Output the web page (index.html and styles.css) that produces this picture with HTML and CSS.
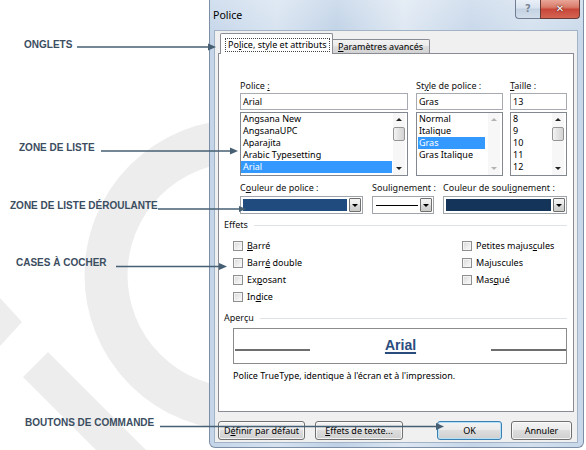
FILE: index.html
```html
<!DOCTYPE html>
<html lang="fr">
<head>
<meta charset="utf-8">
<title>Police</title>
<link rel="stylesheet" href="styles.css">
</head>
<body>
<div class="page">
  <svg class="watermark" width="586" height="450" viewBox="0 0 586 450">
    <circle cx="240" cy="275" r="134" fill="none" stroke="#ededed" stroke-width="43"/>
    <polygon points="0,298 22,322 0,346" fill="#ededed"/>
    <polygon points="48,352 146,450 96,450 23,377" fill="#ededed"/>
  </svg>

  <div class="window">
    <div class="titlebar">
      <span class="title">Police</span>
      <div class="caption">
        <div class="cap help">?</div>
        <div class="cap close">✕</div>
      </div>
    </div>
    <div class="client">
      <div class="tabs">
        <div class="tab active"><span class="focus">Po<u>l</u>ice, style et attributs</span></div>
        <div class="tab inactive"><u>P</u>aramètres avancés</div>
      </div>
      <div class="panel">
        <div class="fontrow">
          <div class="fcol w1">
            <div class="lbl">Police <u>:</u></div>
            <div class="tbox">Arial</div>
            <div class="list">
              <ul class="items">
                <li>Angsana New</li>
                <li>AngsanaUPC</li>
                <li>Aparajita</li>
                <li>Arabic Typesetting</li>
                <li class="sel">Arial</li>
              </ul>
              <div class="sbar"><span class="arr up"></span><span class="thumb"></span><span class="arr down"></span></div>
            </div>
          </div>
          <div class="fcol w2">
            <div class="lbl">St<u>y</u>le de police :</div>
            <div class="tbox">Gras</div>
            <div class="list">
              <ul class="items">
                <li>Normal</li>
                <li>Italique</li>
                <li class="sel short">Gras</li>
                <li>Gras Italique</li>
              </ul>
              <div class="sbar disabled"><span class="arr up"></span><span class="arr down"></span></div>
            </div>
          </div>
          <div class="fcol w3">
            <div class="lbl"><u>T</u>aille :</div>
            <div class="tbox">13</div>
            <div class="list">
              <ul class="items">
                <li>8</li>
                <li>9</li>
                <li>10</li>
                <li>11</li>
                <li>12</li>
              </ul>
              <div class="sbar"><span class="arr up"></span><span class="thumb"></span><span class="arr down"></span></div>
            </div>
          </div>
        </div>

        <div class="ddrow">
          <div class="dcol d1">
            <div class="lbl">C<u>o</u>uleur de police :</div>
            <div class="combo"><span class="swatch blue"></span><span class="dbtn"></span></div>
          </div>
          <div class="dcol d2">
            <div class="lbl">Souli<u>g</u>nement :</div>
            <div class="combo"><span class="uline"></span><span class="dbtn"></span></div>
          </div>
          <div class="dcol d3">
            <div class="lbl">Couleur de soul<u>i</u>gnement :</div>
            <div class="combo"><span class="swatch navy"></span><span class="dbtn"></span></div>
          </div>
        </div>

        <div class="group"><span>Effets</span><span class="rule"></span></div>
        <div class="checks">
          <div class="chk"><span class="box"></span><span><u>B</u>arré</span></div>
          <div class="chk"><span class="box"></span><span>Petites majus<u>c</u>ules</span></div>
          <div class="chk"><span class="box"></span><span>Barr<u>é</u> double</span></div>
          <div class="chk"><span class="box"></span><span>Ma<u>j</u>uscules</span></div>
          <div class="chk"><span class="box"></span><span>Ex<u>p</u>osant</span></div>
          <div class="chk"><span class="box"></span><span>Mas<u>q</u>ué</span></div>
          <div class="chk"><span class="box"></span><span>In<u>d</u>ice</span></div>
        </div>

        <div class="group g2"><span>Aperçu</span><span class="rule"></span></div>
        <div class="preview">
          <span class="pline"></span>
          <span class="ptext">Arial</span>
          <span class="pline"></span>
        </div>
        <p class="desc">Police TrueType, identique à l'écran et à l'impression.</p>
      </div>

      <div class="btnrow">
        <button class="btn b1">D<u>é</u>finir par défaut</button>
        <button class="btn b2"><u>E</u>ffets de texte...</button>
        <button class="btn ok">OK</button>
        <button class="btn cancel">Annuler</button>
      </div>
    </div>
  </div>

  <div class="note n1">ONGLETS</div>
  <div class="note n2">ZONE DE LISTE</div>
  <div class="note n3">ZONE DE LISTE DÉROULANTE</div>
  <div class="note n4">CASES À COCHER</div>
  <div class="note n5">BOUTONS DE COMMANDE</div>

  <svg class="arrows" width="586" height="450" viewBox="0 0 586 450">
    <g stroke="#465f73" stroke-width="1.5" fill="none">
      <line x1="77" y1="47" x2="209" y2="47"/>
      <line x1="101" y1="151" x2="231" y2="151"/>
      <line x1="158" y1="209" x2="240" y2="209"/>
      <line x1="116" y1="266.5" x2="220" y2="266.5"/>
      <line x1="160" y1="426.5" x2="437" y2="426.5"/>
    </g>
    <g fill="#465f73">
      <polygon points="216,47 208,43.5 208,50.5"/>
      <polygon points="238,151 230,147.5 230,154.5"/>
      <polygon points="246,209 239,206 239,212"/>
      <polygon points="227,266.5 219,263 219,270"/>
      <polygon points="444,426.5 436,423 436,430"/>
    </g>
  </svg>
</div>
</body>
</html>
```
FILE: styles.css
```css
* { box-sizing: border-box; margin: 0; padding: 0; }
html, body { width: 586px; height: 450px; overflow: hidden; background: #fff; }
body {
  font-family: "Noto Sans", "Open Sans", sans-serif;
  font-size: 9px;
  line-height: 12px;
  color: #000;
}
u { text-decoration: underline; text-underline-offset: 1px; text-decoration-thickness: 1px; }
ul { list-style: none; }

.page { position: relative; width: 586px; height: 450px; padding-left: 209px; }
.watermark { position: absolute; left: 0; top: 0; }

/* ---------- window frame ---------- */
.window {
  position: relative;
  width: 375px;
  height: 448px;
  display: flex;
  flex-direction: column;
  border: 1px solid #7d8fa6;
  border-top: 0;
  border-radius: 0 0 6px 6px;
  padding: 0 5px 4px 4px;
  background:
    linear-gradient(180deg, rgba(255,255,255,0.25), rgba(255,255,255,0) 40px),
    linear-gradient(90deg, #c4d5e9 0%, #d6e2f0 18%, #bfd1e6 34%, #dde7f2 52%, #c6d6e9 70%, #d3e0ee 86%, #c8d8ea 100%);
}
.titlebar { height: 30px; display: flex; align-items: flex-start; }
.title { font-size: 10.6px; line-height: 12px; padding-top: 9px; margin-left: -1px; color: #000; }
.caption { margin-left: auto; margin-right: -2px; display: flex; }
.cap {
  height: 19px;
  border: 1px solid #6f7e93;
  border-top: 0;
  display: flex;
  align-items: center;
  justify-content: center;
  font-family: "DejaVu Sans", sans-serif;
  font-weight: bold;
}
.help {
  width: 25px;
  border-radius: 0 0 0 4px;
  border-right: 0;
  background: linear-gradient(180deg, #e9eff7 0%, #d8e2ee 45%, #c3d1e2 50%, #d3deeb 100%);
  color: #7b8799;
  font-size: 10px;
}
.close {
  width: 40px;
  border-radius: 0 0 4px 0;
  border-color: #6b3a35;
  background: linear-gradient(180deg, #e9a698 0%, #d97c6a 40%, #c8473a 52%, #d46552 100%);
  color: #fff;
  font-size: 10px;
  text-shadow: 0 0 2px #5a1f18, 0 0 1px #5a1f18;
}

/* ---------- client ---------- */
.client {
  height: 413px;
  background: #f0f0f0;
  border: 1px solid #a3b3c6;
  padding: 2px 3px 2px 3px;
  display: flex;
  flex-direction: column;
}
.tabs {
  display: flex;
  align-items: flex-start;
  height: 21px;
  margin-bottom: -1px;
  position: relative;
  z-index: 1;
}
.tab { border: 1px solid #898c95; border-bottom: 0; }
.tab.active {
  width: 113px;
  height: 21px;
  margin-left: 2px;
  background: #fff;
  padding: 4px 0 0 4px;
  border-radius: 2px 2px 0 0;
}
.focus {
  display: inline-block;
  height: 14px;
  line-height: 12px;
  padding: 0 2px;
  border: 1px dotted #444;
  white-space: nowrap;
}
.tab.inactive {
  width: 97px;
  height: 14px;
  margin-top: 6px;
  border-left: 0;
  line-height: 13px;
  padding-left: 5px;
  white-space: nowrap;
  background: linear-gradient(180deg, #f3f3f3 0%, #ebebeb 45%, #dedede 50%, #d2d2d2 100%);
  border-radius: 0 2px 0 0;
}
.panel {
  height: 359px;
  flex: none;
  border: 1px solid #898c95;
  background: #fff;
  padding: 26px 6px 0 5px;
}

/* ---------- font / style / size ---------- */
.fontrow { display: flex; margin-left: 16px; }
.fcol { display: flex; flex-direction: column; }
.w1 { width: 168px; }
.w2 { width: 87px; margin-left: 8px; }
.w3 { width: 57px; margin-left: 7px; }
.lbl { height: 12px; line-height: 12px; margin-bottom: 1px; white-space: nowrap; color: #111; }
.tbox {
  height: 17px;
  border: 1px solid #a7abb1;
  padding-left: 2px;
  line-height: 15px;
}
.list {
  height: 64px;
  margin-top: 2px;
  border: 1px solid #828790;
  display: flex;
}
.items { flex: 1; }
.items li { height: 12px; line-height: 12px; padding-left: 2px; white-space: nowrap; }
.items li.sel { background: #3399ff; color: #fff; }
.items li.sel.short { margin: 0 2px 0 1px; padding-left: 1px; }
.sbar {
  width: 12px;
  margin: 0 2px 0 1px;
  display: flex;
  flex-direction: column;
  align-items: center;
  background: #f7f7f7;
}
.arr { width: 0; height: 0; border-left: 3px solid transparent; border-right: 3px solid transparent; }
.arr.up { border-bottom: 3px solid #222; margin-top: 5px; }
.arr.down { border-top: 3px solid #222; margin-top: auto; margin-bottom: 5px; }
.sbar.disabled .arr.up { border-bottom-color: #b3b3b3; }
.sbar.disabled .arr.down { border-top-color: #b3b3b3; }
.thumb {
  width: 12px;
  height: 14px;
  margin-top: 6px;
  border: 1px solid #959595;
  border-radius: 2px;
  background: linear-gradient(90deg, #f3f3f3, #e2e2e2 50%, #d4d4d4);
}

/* ---------- dropdowns ---------- */
.ddrow { display: flex; margin-left: 16px; margin-top: 6px; }
.dcol { display: flex; flex-direction: column; }
.d1 { width: 123px; }
.d2 { width: 62px; margin-left: 9px; }
.d3 { width: 124px; margin-left: 9px; }
.ddrow .lbl { margin-bottom: 2px; }
.combo {
  height: 18px;
  border: 1px solid #a0a5ab;
  background: #fff;
  display: flex;
  align-items: center;
  padding: 0 1px 0 2px;
}
.swatch { flex: 1; height: 12px; margin-right: 2px; }
.swatch.blue { background: #1f4b7e; }
.swatch.navy { background: #143459; }
.uline { flex: 1; height: 1px; background: #000; margin: 0 2px 0 1px; }
.dbtn {
  width: 12px;
  height: 14px;
  border: 1px solid #707070;
  border-radius: 1px;
  background: linear-gradient(180deg, #f3f3f3 0%, #e8e8e8 50%, #d9d9d9 51%, #cbcbcb 100%);
  display: flex;
  align-items: center;
  justify-content: center;
}
.dbtn::after {
  content: "";
  border-left: 3px solid transparent;
  border-right: 3px solid transparent;
  border-top: 3px solid #000;
}

/* ---------- groups ---------- */
.group { display: flex; align-items: center; height: 12px; margin-top: 5px; color: #111; }
.group .rule { flex: 1; height: 1px; background: #dfe3e8; margin-left: 6px; }
.group.g2 { margin-top: 7px; }

.checks {
  display: grid;
  grid-template-columns: 229px auto;
  grid-auto-rows: 17px;
  margin-top: 6px;
  margin-left: 9px;
}
.chk { display: flex; align-items: center; white-space: nowrap; }
.box {
  width: 10px;
  height: 10px;
  margin-right: 4px;
  border: 1px solid #8e8f8f;
  background: linear-gradient(135deg, #d8d8d8, #f2f2f2 70%, #fafafa);
  box-shadow: inset 0 0 0 1px #f4f4f4;
}

/* ---------- preview ---------- */
.preview {
  height: 36px;
  margin-top: 4px;
  margin-left: 9px;
  border: 1px solid #8b8b8b;
  display: flex;
  align-items: flex-start;
}
.pline { width: 75px; height: 2px; background: #6e6e6e; margin-top: 20px; }
.pline:first-child { margin-left: 1px; }
.ptext {
  flex: 1;
  text-align: center;
  font-family: "Liberation Sans", Arial, sans-serif;
  font-weight: bold;
  font-size: 14px;
  line-height: 16px;
  margin-top: 8px;
  color: #2a4c7d;
  text-decoration: underline;
  text-underline-offset: 2px;
  text-decoration-thickness: 1.5px;
}
.desc { margin-top: 6px; margin-left: 9px; height: 12px; white-space: nowrap; }

/* ---------- buttons ---------- */
.btnrow { display: flex; margin-top: 9px; height: 19px; }
.btn {
  height: 19px;
  font: inherit;
  line-height: 16px;
  color: #000;
  border: 1px solid #707070;
  border-radius: 3px;
  background: linear-gradient(180deg, #f3f3f3 0%, #ebebeb 45%, #dddddd 50%, #cfcfcf 100%);
  box-shadow: inset 0 0 0 1px rgba(255,255,255,0.75);
  white-space: nowrap;
}
.b1 { width: 87px; }
.b2 { width: 88px; margin-left: 10px; }
.ok {
  width: 65px;
  margin-left: auto;
  border-color: #3c7fb1;
  box-shadow: inset 0 0 0 1px #b3e0f9;
}
.cancel { width: 61px; margin-left: 9px; margin-right: 2px; }

/* ---------- annotations ---------- */
.note {
  position: absolute;
  font-family: "Liberation Sans", Arial, sans-serif;
  font-weight: bold;
  font-size: 10px;
  line-height: 12px;
  color: #3b4d61;
  white-space: nowrap;
}
.n1 { left: 24px; top: 39px; }
.n2 { left: 19px; top: 142px; }
.n3 { left: 10px; top: 200px; }
.n4 { left: 16px; top: 257px; }
.n5 { left: 25px; top: 417px; }
.arrows { position: absolute; left: 0; top: 0; pointer-events: none; }
```
